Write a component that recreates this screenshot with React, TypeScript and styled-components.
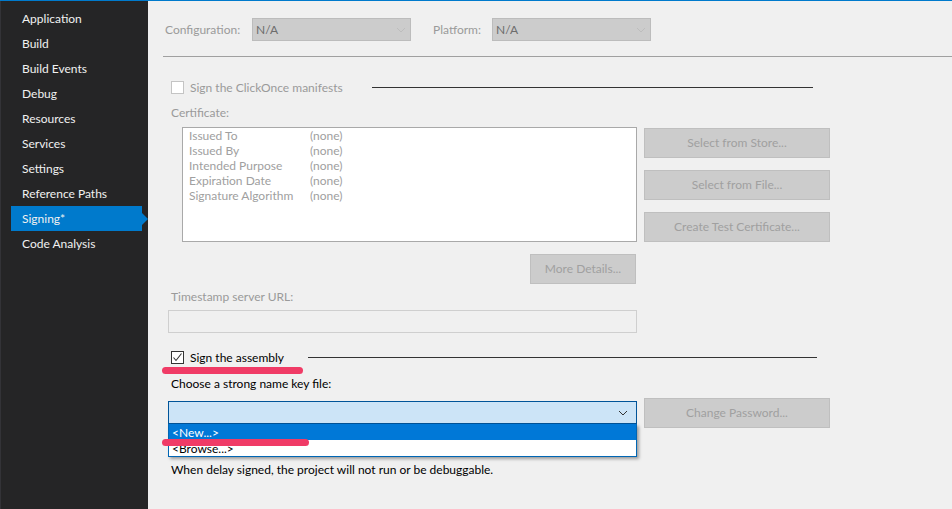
import React from "react";
import styled, { createGlobalStyle } from "styled-components";

const Global = createGlobalStyle`
  html, body { margin: 0; padding: 0; }
  body { font-family: "Segoe UI", Lato, "Noto Sans", sans-serif; font-size: 12px; background: #f0f0f0; }
  * { box-sizing: border-box; }
`;

const Page = styled.div`
  display: flex;
  width: 952px;
  height: 509px;
  border-top: 1px solid #007acc;
  overflow: hidden;
`;

const Sidebar = styled.nav`
  width: 148px;
  flex: none;
  background: #252526;
  border-left: 1px solid #333337;
  padding-top: 5px;
  display: flex;
  flex-direction: column;
`;

const NavItem = styled.div<{ $active?: boolean }>`
  position: relative;
  height: 25px;
  line-height: 25px;
  margin: 0 6px 0 10px;
  padding-left: 11px;
  color: #f1f1f1;
  background: ${(p) => (p.$active ? "#007acc" : "transparent")};
  white-space: nowrap;
  &::after {
    content: "";
    display: ${(p) => (p.$active ? "block" : "none")};
    position: absolute;
    right: -6px;
    top: 7px;
    border-top: 6px solid transparent;
    border-bottom: 6px solid transparent;
    border-left: 6px solid #007acc;
  }
`;

const Main = styled.main`
  position: relative;
  flex: 1;
  background: #f0f0f0;
  display: flex;
  flex-direction: column;
`;

const TopRow = styled.div`
  display: flex;
  align-items: center;
  height: 23px;
  margin-top: 17px;
  padding-left: 17px;
`;

const TopLabel = styled.span<{ $w: number; $ml?: number }>`
  width: ${(p) => p.$w}px;
  margin-left: ${(p) => p.$ml ?? 0}px;
  color: #9a9a9a;
  white-space: nowrap;
`;

const DisabledCombo = styled.div`
  width: 159px;
  height: 23px;
  background: #cccccc;
  border: 1px solid #bcbcbc;
  color: #6d6d6d;
  padding: 0 0 0 3px;
  display: flex;
  align-items: center;
  justify-content: space-between;
`;

const Separator = styled.div`
  height: 1px;
  background: #a0a0a0;
  margin: 15px 0 0 15px;
`;

const Body = styled.div`
  display: flex;
  flex-direction: column;
  padding-left: 20px;
`;

const CheckRow = styled.div<{ $mt: number }>`
  display: flex;
  align-items: center;
  height: 16px;
  margin-top: ${(p) => p.$mt}px;
  padding-left: 3px;
`;

const CheckLabel = styled.label<{ $w: number; $disabled?: boolean }>`
  width: ${(p) => p.$w}px;
  display: flex;
  align-items: center;
  gap: 6px;
  line-height: 15px;
  color: ${(p) => (p.$disabled ? "#9a9a9a" : "#000")};
  white-space: nowrap;
`;

const Box = styled.span<{ $disabled?: boolean }>`
  width: 13px;
  height: 13px;
  flex: none;
  background: #fff;
  border: 1px solid ${(p) => (p.$disabled ? "#c4c4c4" : "#333")};
  display: flex;
  align-items: center;
  justify-content: center;
`;

const RuleLine = styled.div<{ $w: number }>`
  width: ${(p) => p.$w}px;
  height: 1px;
  background: #333;
`;

const Label = styled.div<{ $mt: number; $disabled?: boolean }>`
  height: 16px;
  line-height: 16px;
  margin-top: ${(p) => p.$mt}px;
  padding-left: 3px;
  color: ${(p) => (p.$disabled ? "#9a9a9a" : "#000")};
  white-space: nowrap;
`;

const Row = styled.div<{ $mt: number }>`
  display: flex;
  align-items: flex-start;
  gap: 7px;
  margin-top: ${(p) => p.$mt}px;
`;

const LeftCol = styled.div`
  position: relative;
  width: 469px;
  display: flex;
  flex-direction: column;
  align-items: flex-end;
`;

const ButtonCol = styled.div`
  display: flex;
  flex-direction: column;
  gap: 12px;
  padding-top: 1px;
`;

const CertBox = styled.div`
  width: 455px;
  height: 115px;
  background: #fff;
  border: 1px solid #a9a9a9;
  padding: 0 0 0 6px;
  display: grid;
  grid-template-columns: 121px auto;
  grid-auto-rows: 15px;
  align-content: start;
  color: #a0a0a0;
  line-height: 15px;
  & > span {
    white-space: nowrap;
    overflow: hidden;
  }
`;

const Button = styled.div<{ $w?: number; $mr?: number }>`
  width: ${(p) => p.$w ?? 186}px;
  height: 30px;
  margin-right: ${(p) => p.$mr ?? 0}px;
  padding-bottom: 1px;
  background: #cccccc;
  border: 1px solid #bfbfbf;
  color: #a0a0a0;
  display: flex;
  align-items: center;
  justify-content: center;
  white-space: nowrap;
`;

const TextBox = styled.div`
  width: 469px;
  height: 23px;
  margin-top: 5px;
  background: #f0f0f0;
  border: 1px solid #cfcfcf;
`;

const ActiveCombo = styled.div`
  width: 469px;
  height: 23px;
  margin-top: 3px;
  background: #cce4f7;
  border: 1px solid #005499;
  display: flex;
  align-items: center;
  justify-content: flex-end;
  padding-right: 4px;
`;

const DropList = styled.ul`
  position: absolute;
  top: 26px;
  left: 0;
  width: 469px;
  margin: 0;
  padding: 0;
  list-style: none;
  background: #fff;
  border: 1px solid #0066b4;
  border-top: none;
  box-shadow: 2px 2px 3px rgba(0, 0, 0, 0.35);
  z-index: 2;
`;

const DropItem = styled.li<{ $selected?: boolean }>`
  padding-left: 3px;
  margin-top: ${(p) => (p.$selected ? "0" : "1px")};
  background: ${(p) => (p.$selected ? "#0078d7" : "#fff")};
  color: ${(p) => (p.$selected ? "#fff" : "#000")};
  height: ${(p) => (p.$selected ? "16px" : "15px")};
  line-height: ${(p) => (p.$selected ? "17px" : "15px")};
`;

const Marker = styled.div<{ $top: number; $w: number }>`
  position: absolute;
  left: 14px;
  top: ${(p) => p.$top}px;
  width: ${(p) => p.$w}px;
  height: 7px;
  border-radius: 4px;
  background: #f03b66;
  z-index: 3;
`;

const Chevron = ({ color }: { color: string }) => (
  <svg width="10" height="6" viewBox="0 0 10 6" style={{ marginRight: 4 }}>
    <polyline points="1,1 5,5 9,1" fill="none" stroke={color} strokeWidth="1" />
  </svg>
);

const Check = () => (
  <svg width="11" height="11" viewBox="0 0 11 11">
    <polyline points="1.5,5.5 4,8.5 9.5,1.5" fill="none" stroke="#333" strokeWidth="1.1" />
  </svg>
);

const navItems = [
  "Application",
  "Build",
  "Build Events",
  "Debug",
  "Resources",
  "Services",
  "Settings",
  "Reference Paths",
  "Signing*",
  "Code Analysis",
];

const certRows = [
  "Issued To",
  "Issued By",
  "Intended Purpose",
  "Expiration Date",
  "Signature Algorithm",
];

export default function App() {
  return (
    <>
      <Global />
      <Page>
        <Sidebar>
          {navItems.map((n) => (
            <NavItem key={n} $active={n === "Signing*"}>
              {n}
            </NavItem>
          ))}
        </Sidebar>
        <Main>
          <TopRow>
            <TopLabel $w={87}>Configuration:</TopLabel>
            <DisabledCombo>
              N/A
              <Chevron color="#bdbdbd" />
            </DisabledCombo>
            <TopLabel $w={59} $ml={22}>
              Platform:
            </TopLabel>
            <DisabledCombo>
              N/A
              <Chevron color="#bdbdbd" />
            </DisabledCombo>
          </TopRow>
          <Separator />
          <Body>
            <CheckRow $mt={22}>
              <CheckLabel $w={201} $disabled>
                <Box $disabled />
                Sign the ClickOnce manifests
              </CheckLabel>
              <RuleLine $w={441} />
            </CheckRow>
            <Label $mt={10} $disabled>
              Certificate:
            </Label>
            <Row $mt={6}>
              <LeftCol>
                <CertBox>
                  {certRows.map((r) => (
                    <React.Fragment key={r}>
                      <span>{r}</span>
                      <span>(none)</span>
                    </React.Fragment>
                  ))}
                </CertBox>
              </LeftCol>
              <ButtonCol>
                <Button>Select from Store...</Button>
                <Button>Select from File...</Button>
                <Button>Create Test Certificate...</Button>
              </ButtonCol>
            </Row>
            <Row $mt={12}>
              <LeftCol>
                <Button $w={106} $mr={1}>
                  More Details...
                </Button>
              </LeftCol>
            </Row>
            <Label $mt={5} $disabled>
              Timestamp server URL:
            </Label>
            <TextBox />
            <CheckRow $mt={16}>
              <CheckLabel $w={137}>
                <Box>
                  <Check />
                </Box>
                Sign the assembly
              </CheckLabel>
              <RuleLine $w={509} />
            </CheckRow>
            <Label $mt={11}>Choose a strong name key file:</Label>
            <Row $mt={6}>
              <LeftCol>
                <ActiveCombo>
                  <Chevron color="#333" />
                </ActiveCombo>
                <DropList>
                  <DropItem $selected>&lt;New...&gt;</DropItem>
                  <DropItem>&lt;Browse...&gt;</DropItem>
                </DropList>
              </LeftCol>
              <Button>Change Password...</Button>
            </Row>
            <Label $mt={34}>When delay signed, the project will not run or be debuggable.</Label>
          </Body>
          <Marker $top={366} $w={141} />
          <Marker $top={438} $w={147} />
        </Main>
      </Page>
    </>
  );
}
